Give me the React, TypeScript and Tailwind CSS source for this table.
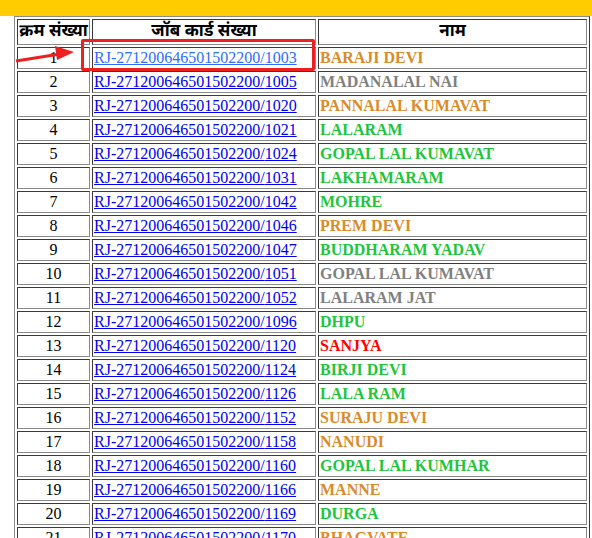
import React from "react";

type Row = { n: number; card: string; name: string; c: string };

const O = "text-[#d98b2b]";
const G = "text-[#808080]";
const GR = "text-[#1fc43c]";
const R = "text-[#ff0000]";

const rows: Row[] = [
  { n: 1, card: "1003", name: "BARAJI DEVI", c: O },
  { n: 2, card: "1005", name: "MADANALAL NAI", c: G },
  { n: 3, card: "1020", name: "PANNALAL KUMAVAT", c: O },
  { n: 4, card: "1021", name: "LALARAM", c: GR },
  { n: 5, card: "1024", name: "GOPAL LAL KUMAVAT", c: GR },
  { n: 6, card: "1031", name: "LAKHAMARAM", c: GR },
  { n: 7, card: "1042", name: "MOHRE", c: GR },
  { n: 8, card: "1046", name: "PREM DEVI", c: O },
  { n: 9, card: "1047", name: "BUDDHARAM YADAV", c: GR },
  { n: 10, card: "1051", name: "GOPAL LAL KUMAVAT", c: G },
  { n: 11, card: "1052", name: "LALARAM JAT", c: G },
  { n: 12, card: "1096", name: "DHPU", c: GR },
  { n: 13, card: "1120", name: "SANJYA", c: R },
  { n: 14, card: "1124", name: "BIRJI DEVI", c: GR },
  { n: 15, card: "1126", name: "LALA RAM", c: GR },
  { n: 16, card: "1152", name: "SURAJU DEVI", c: O },
  { n: 17, card: "1158", name: "NANUDI", c: O },
  { n: 18, card: "1160", name: "GOPAL LAL KUMHAR", c: GR },
  { n: 19, card: "1166", name: "MANNE", c: O },
  { n: 20, card: "1169", name: "DURGA", c: GR },
  { n: 21, card: "1170", name: "BHAGVATE", c: O },
];

const cell =
  "border border-solid border-t-[#3a3a3a] border-l-[#3a3a3a] border-b-[#8a8a8a] border-r-[#8a8a8a] p-[1px]";

const hdrFont = {
  fontFamily:
    '"Noto Sans Devanagari", "Noto Sans", "DejaVu Sans", "Liberation Sans", sans-serif',
};

export default function App() {
  return (
    <div className="relative w-[592px] h-[538px] overflow-hidden bg-white font-['Liberation_Serif','Times_New_Roman',serif]">
      <div className="h-[16px] bg-[#ffcc00]" />
      <div className="relative ml-[14px] w-[576px]">
        <table className="table-fixed w-[576px] border-separate border-spacing-[2px] border border-solid border-t-[#8a8a8a] border-l-[#8a8a8a] border-b-[#3a3a3a] border-r-[#3a3a3a] text-[16px] text-black">
          <thead>
            <tr>
              <th
                className={`${cell} w-[73px] h-[26px] text-center font-bold text-[17px] leading-[22px] whitespace-nowrap overflow-hidden`}
                style={hdrFont}
              >
                क्रम संख्या
              </th>
              <th
                className={`${cell} w-[224px] h-[26px] text-center font-bold text-[17px] leading-[22px] whitespace-nowrap`}
                style={hdrFont}
              >
                जॉब कार्ड संख्या
              </th>
              <th
                className={`${cell} w-[269px] h-[26px] text-center font-bold text-[17px] leading-[22px] whitespace-nowrap`}
                style={hdrFont}
              >
                नाम
              </th>
            </tr>
          </thead>
          <tbody>
            {rows.map((r) => (
              <tr key={r.n}>
                <td className={`${cell} h-[22px] text-center leading-[18px] whitespace-nowrap`}>
                  {r.n}
                </td>
                <td className={`${cell} h-[22px] text-left leading-[18px] whitespace-nowrap`}>
                  <a
                    href="#"
                    className={`underline ${r.n === 1 ? "text-[#2f6bff]" : "text-[#0000ee]"}`}
                  >
                    RJ-271200646501502200/{r.card}
                  </a>
                </td>
                <td
                  className={`${cell} h-[22px] text-left leading-[18px] font-bold whitespace-nowrap ${r.c}`}
                >
                  {r.name}
                </td>
              </tr>
            ))}
          </tbody>
        </table>
        {/* red highlight box */}
        <div className="absolute left-[67px] top-[23px] w-[234px] h-[32px] border-[3px] border-[#ee1f1f] rounded-[2px]" />
      </div>
      {/* red arrow */}
      <svg
        className="absolute left-0 top-0"
        width="592"
        height="538"
        viewBox="0 0 592 538"
      >
        <line x1="16" y1="61" x2="60" y2="54" stroke="#ee1f1f" strokeWidth="3" />
        <polygon points="74,52 55,46 57,60" fill="#ee1f1f" />
      </svg>
    </div>
  );
}
